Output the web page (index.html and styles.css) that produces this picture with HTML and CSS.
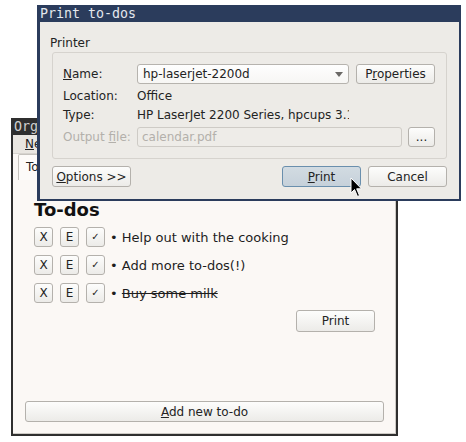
FILE: index.html
```html
<!DOCTYPE html>
<html>
<head>
<meta charset="utf-8">
<title>Print to-dos</title>
<link rel="stylesheet" href="styles.css">
</head>
<body>
<div class="desktop">
  <div class="win main-win">
    <div class="titlebar main-title">Organizer</div>
    <div class="menubar"><span class="menu-item"><u>N</u>ew</span></div>
    <div class="tabstrip"><div class="tab">To-dos</div></div>
    <div class="pane">
      <div class="todo-area">
        <h1 class="todo-heading">To-dos</h1>
        <ul class="todo-list">
          <li class="todo-row">
            <button class="btn btn-small">X</button>
            <button class="btn btn-small">E</button>
            <button class="btn btn-small btn-check">✓</button>
            <span class="todo-text">• Help out with the cooking</span>
          </li>
          <li class="todo-row">
            <button class="btn btn-small">X</button>
            <button class="btn btn-small">E</button>
            <button class="btn btn-small btn-check">✓</button>
            <span class="todo-text">• Add more to-dos(!)</span>
          </li>
          <li class="todo-row">
            <button class="btn btn-small">X</button>
            <button class="btn btn-small">E</button>
            <button class="btn btn-small btn-check">✓</button>
            <span class="todo-text">• <span class="done">Buy some milk</span></span>
          </li>
        </ul>
        <button class="btn btn-print-list">Print</button>
      </div>
      <div class="spacer"></div>
      <button class="btn btn-add"><u>A</u>dd new to-do</button>
    </div>
  </div>

  <div class="win dialog">
    <div class="titlebar dlg-title">Print to-dos</div>
    <div class="dlg-body">
      <div class="group-label">Printer</div>
      <div class="group">
        <div class="form-grid">
          <div class="form-label"><u>N</u>ame:</div>
          <div class="field-row">
            <div class="combo">
              <span class="combo-text">hp-laserjet-2200d</span>
              <svg class="combo-arrow" width="8" height="5" viewBox="0 0 8 5"><path d="M0 0 L8 0 L4 5 Z" fill="#6b6966"/></svg>
            </div>
            <button class="btn btn-dlg">P<u>r</u>operties</button>
          </div>
          <div class="form-label">Location:</div>
          <div class="form-value">Office</div>
          <div class="form-label">Type:</div>
          <div class="form-value clip">HP LaserJet 2200 Series, hpcups 3.18.7</div>
          <div class="form-label disabled">Output <u>f</u>ile:</div>
          <div class="field-row tight">
            <div class="input-disabled">calendar.pdf</div>
            <button class="btn btn-dots">...</button>
          </div>
        </div>
      </div>
      <div class="dlg-buttons">
        <button class="btn btn-dlg"><u>O</u>ptions &gt;&gt;</button>
        <span class="spacer"></span>
        <button class="btn btn-dlg btn-hover"><u>P</u>rint</button>
        <button class="btn btn-dlg">Cancel</button>
      </div>
    </div>
  </div>

  <svg class="cursor" width="13" height="21" viewBox="0 0 13 21">
    <path d="M1 1 L1 16 L4.5 12.5 L7.5 19.5 L9.5 18.5 L6.7 11.8 L11.5 11.8 Z" fill="#000" stroke="#fff" stroke-width="1" stroke-linejoin="round"/>
  </svg>
</div>
</body>
</html>
```

FILE: styles.css
```css
* { box-sizing: border-box; }

html, body {
  margin: 0;
  padding: 0;
  background: #ffffff;
}

body {
  font-family: "DejaVu Sans", "Noto Sans", sans-serif;
  font-size: 12px;
  color: #232323;
}

.desktop {
  position: relative;
  width: 466px;
  height: 442px;
  overflow: hidden;
}

.win {
  position: absolute;
  display: flex;
  flex-direction: column;
}

.titlebar {
  font-family: "DejaVu Sans Mono", monospace;
  font-size: 13.3px;
  height: 17px;
  line-height: 17px;
  white-space: nowrap;
  overflow: hidden;
  flex: none;
}

/* ---------- main window ---------- */
.main-win {
  left: 11px;
  top: 118px;
  width: 387px;
  height: 318px;
  border: 2px solid #2f2f2f;
  border-top: 0;
  background: #fbf8f5;
  box-shadow: inset -1px -1px 0 #cdcac5;
}

.main-title {
  background: #2f2f2f;
  color: #cfcfcf;
  padding-left: 1px;
}

.menubar {
  height: 19px;
  line-height: 18px;
  background: #e9e6e1;
  border-bottom: 1px solid #d6d3ce;
  padding-left: 12px;
  flex: none;
}

.tabstrip {
  height: 26px;
  padding-left: 5px;
  flex: none;
}

.tab {
  width: 80px;
  height: 26px;
  border: 1px solid #c6c3be;
  border-bottom: 0;
  border-radius: 2px 2px 0 0;
  padding-left: 7px;
  line-height: 24px;
  background: #fdfbf9;
}

.pane {
  flex: 1;
  display: flex;
  flex-direction: column;
  padding: 0 12px 12px;
}

.todo-area {
  margin: 19px 9px 0;
  display: flex;
  flex-direction: column;
}

.todo-heading {
  margin: 0;
  font-size: 18px;
  line-height: 21px;
  font-weight: bold;
  color: #111;
}

.todo-list {
  list-style: none;
  margin: 3px 0 0;
  padding: 0;
}

.todo-row {
  height: 28px;
  display: flex;
  align-items: center;
  gap: 7px;
}

.todo-text {
  font-size: 13px;
  margin-left: -2px;
  color: #1e1e1e;
}

.done {
  text-decoration: line-through;
}

.spacer {
  flex: 1;
}

/* ---------- buttons ---------- */
.btn {
  font: inherit;
  color: #232323;
  padding: 0;
  margin: 0;
  border: 1px solid #b4b1ac;
  border-radius: 3px;
  background: linear-gradient(#fdfdfc, #ecebe8);
  line-height: 1;
  flex: none;
}

.btn-small {
  width: 19px;
  height: 20px;
  font-size: 12px;
}

.btn-check {
  font-size: 10px;
}

.btn-print-list {
  align-self: flex-end;
  width: 79px;
  height: 22px;
  margin-top: 3px;
}

.btn-add {
  width: 100%;
  height: 21px;
}

/* ---------- dialog ---------- */
.dialog {
  left: 37px;
  top: 5px;
  width: 424px;
  height: 196px;
  border: 2px solid #2b3c5c;
  border-left-width: 3px;
  border-top: 0;
  background: #edebe7;
}

.dlg-title {
  background: #2b3c5c;
  color: #e4e7ed;
  padding-left: 0;
}

.dlg-body {
  flex: 1;
  display: flex;
  flex-direction: column;
  padding: 14px 12px 0 12px;
}

.group-label {
  height: 14px;
  line-height: 14px;
  margin-left: -2px;
  margin-bottom: 2px;
}

.group {
  border: 1px solid #d6d3ce;
  border-radius: 3px;
  padding: 11px 11px 11px 10px;
}

.form-grid {
  display: grid;
  grid-template-columns: 74px 1fr;
  grid-template-rows: 20px 14px 14px 20px;
  row-gap: 5px;
  align-items: center;
}

.form-label,
.form-value {
  line-height: 14px;
  white-space: nowrap;
}

.disabled {
  color: #b3b0ab;
}

.clip {
  width: 212px;
  overflow: hidden;
}

.field-row {
  display: flex;
  gap: 7px;
  height: 20px;
}

.field-row.tight {
  gap: 6px;
}

.combo {
  flex: 1;
  height: 20px;
  display: flex;
  align-items: center;
  justify-content: space-between;
  border: 1px solid #b6b3ae;
  border-radius: 3px;
  background: linear-gradient(#fefefe, #f7f6f4);
  padding: 0 5px 0 5px;
}

.combo-arrow {
  display: block;
}

.input-disabled {
  flex: 1;
  height: 20px;
  line-height: 18px;
  border: 1px solid #cecbc6;
  border-radius: 3px;
  background: #eeece8;
  color: #b3b0ab;
  padding-left: 4px;
}

.btn-dlg {
  width: 79px;
  height: 20px;
}

.btn-dots {
  width: 27px;
  height: 20px;
}

.dlg-buttons {
  display: flex;
  gap: 7px;
  margin-top: 7px;
  height: 21px;
}

.dlg-buttons .btn-dlg {
  height: 21px;
}

.btn-hover {
  background: linear-gradient(#d2dbe2, #c6d1da);
  border-color: #6a8fad;
}

.cursor {
  position: absolute;
  left: 350px;
  top: 177px;
}
```
